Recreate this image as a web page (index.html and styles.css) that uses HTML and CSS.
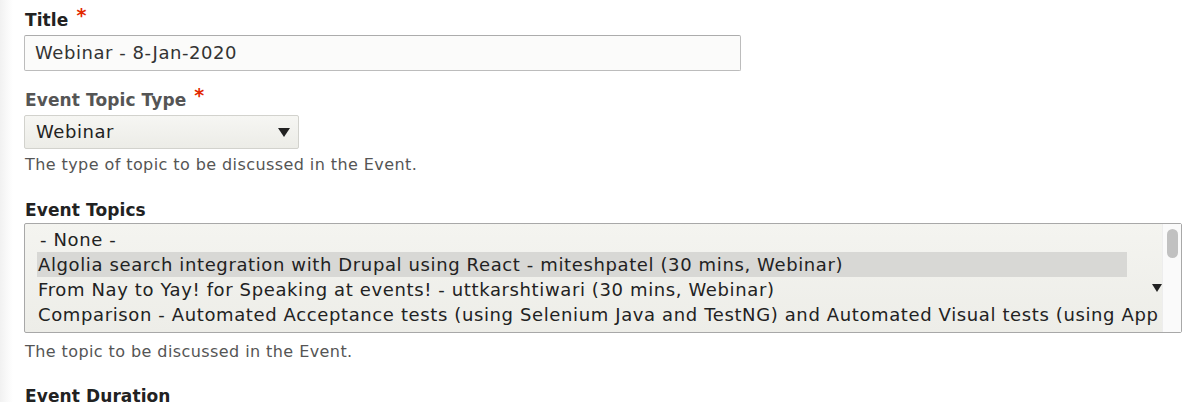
FILE: index.html
```html
<!DOCTYPE html>
<html lang="en">
<head>
<meta charset="utf-8">
<title>Event form</title>
<link rel="stylesheet" href="styles.css">
</head>
<body>
<form class="form">
  <div class="field field-title">
    <label class="label dark">Title <span class="req">*</span></label>
    <div class="text-input">Webinar - 8-Jan-2020</div>
  </div>

  <div class="field field-type">
    <label class="label gray">Event Topic Type <span class="req">*</span></label>
    <div class="select">
      <span>Webinar</span>
      <span class="arrow"></span>
    </div>
    <div class="desc">The type of topic to be discussed in the Event.</div>
  </div>

  <div class="field field-topics">
    <label class="label dark">Event Topics</label>
    <div class="multi">
      <div class="options">
        <div class="opt none">- None -</div>
        <div class="opt sel">Algolia search integration with Drupal using React - miteshpatel (30 mins, Webinar)</div>
        <div class="opt">From Nay to Yay! for Speaking at events! - uttkarshtiwari (30 mins, Webinar)</div>
        <div class="opt">Comparison - Automated Acceptance tests (using Selenium Java and TestNG) and Automated Visual tests (using Applitools)</div>
      </div>
      <span class="arrow small"></span>
      <div class="track"><div class="thumb"></div></div>
    </div>
    <div class="desc">The topic to be discussed in the Event.</div>
  </div>

  <div class="field field-duration">
    <label class="label dark">Event Duration</label>
  </div>
</form>
</body>
</html>
```
FILE: styles.css
```css
html, body {
  margin: 0;
  padding: 0;
}
body {
  font-family: "DejaVu Sans", "Liberation Sans", sans-serif;
  color: #333;
  background: linear-gradient(to right, #f1f1f1 0, #f8f8f8 6px, #fff 13px);
  height: 402px;
  overflow: hidden;
}
.form {
  padding: 10px 0 0 24px;
}
.field {
  display: flex;
  flex-direction: column;
  align-items: flex-start;
}
.label {
  display: block;
  font-weight: bold;
  font-size: 17px;
  line-height: 20px;
  padding-left: 1px;
  letter-spacing: 0.1px;
}
.label.dark { color: #222; }
.label.gray { color: #555; }
.req {
  color: #e22800;
  font-size: 19px;
  line-height: 0;
  vertical-align: 4px;
  margin-left: 2px;
}
.text-input {
  margin-top: 5px;
  width: 705px;
  height: 34px;
  padding-left: 10px;
  border: 1px solid #bcbcbc;
  border-top-color: #acacac;
  border-radius: 2px;
  background: #fbfbfa;
  font-size: 18px;
  letter-spacing: 0.55px;
  line-height: 34px;
  color: #333;
}
.field-type { margin-top: 19px; }
.select {
  margin-top: 5px;
  width: 254px;
  height: 32px;
  padding: 0 8px 0 11px;
  border: 1px solid #d2d2cd;
  border-radius: 2px;
  background: linear-gradient(#f6f6f3, #ecece7);
  display: flex;
  align-items: center;
  justify-content: space-between;
  font-size: 18px;
  letter-spacing: 0.55px;
  line-height: 32px;
  color: #222;
}
.arrow {
  width: 0;
  height: 0;
  border-left: 6.5px solid transparent;
  border-right: 6.5px solid transparent;
  border-top: 9px solid #222;
}
.desc {
  font-size: 16px;
  letter-spacing: 0.42px;
  color: #555;
  line-height: 20px;
  margin-top: 5.5px;
  padding-left: 1px;
}
.field-topics { margin-top: 25.5px; }
.multi {
  position: relative;
  margin-top: 3px;
  width: 1156px;
  height: 108px;
  border: 1px solid #a8a8a8;
  border-radius: 2px;
  background: linear-gradient(#f4f4f0, #ededE8);
  display: flex;
}
.options {
  flex: 1;
  overflow: hidden;
  margin-right: 4px;
  padding: 3px 0 0 12px;
}
.opt {
  width: 1090px;
  height: 25px;
  line-height: 25px;
  font-size: 18px;
  letter-spacing: 0.62px;
  color: #222;
  white-space: nowrap;
  padding-left: 1px;
  box-sizing: border-box;
}
.opt.none { padding-left: 3px; }
.opt.sel { background: #d8d8d5; }
.arrow.small {
  position: absolute;
  left: 1127px;
  top: 60px;
  border-left-width: 5px;
  border-right-width: 5px;
  border-top-width: 8px;
}
.track {
  width: 18px;
  background: #fafafa;
  border-left: 1px solid #ededed;
  padding-top: 5px;
  display: flex;
  justify-content: center;
}
.thumb {
  width: 11px;
  height: 29px;
  border-radius: 5.5px;
  background: #c1c1c1;
}
.field-topics .desc { margin-top: 8.5px; }
.field-duration { margin-top: 24.5px; }
```
